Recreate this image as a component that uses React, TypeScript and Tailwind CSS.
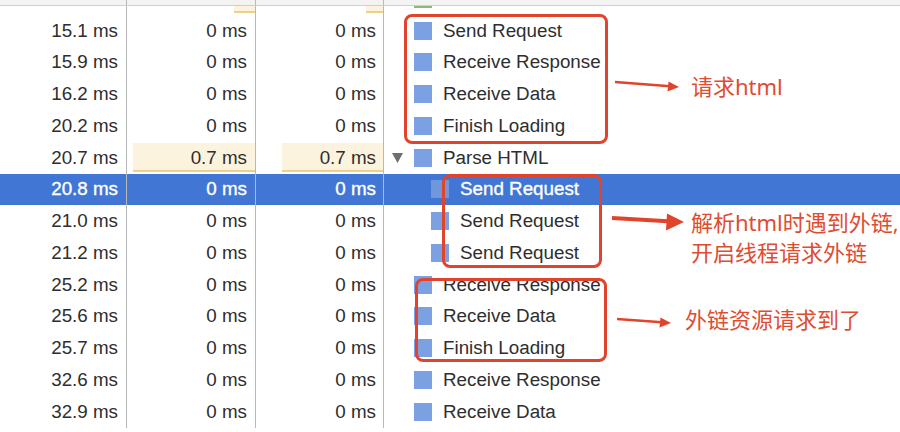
import React from "react";

type Row = {
  t: string;
  a: string;
  b: string;
  name: string;
  level: number;
  barA?: number;
  barB?: number;
  tri?: boolean;
  sel?: boolean;
  color?: string;
  hideText?: boolean;
};

const rows: Row[] = [
  { t: "", a: "", b: "", name: "Composite Layers", level: 0, barA: 21, barB: 17, color: "#8fb87a", hideText: true },
  { t: "15.1 ms", a: "0 ms", b: "0 ms", name: "Send Request", level: 0 },
  { t: "15.9 ms", a: "0 ms", b: "0 ms", name: "Receive Response", level: 0 },
  { t: "16.2 ms", a: "0 ms", b: "0 ms", name: "Receive Data", level: 0 },
  { t: "20.2 ms", a: "0 ms", b: "0 ms", name: "Finish Loading", level: 0 },
  { t: "20.7 ms", a: "0.7 ms", b: "0.7 ms", name: "Parse HTML", level: 0, barA: 122, barB: 101, tri: true },
  { t: "20.8 ms", a: "0 ms", b: "0 ms", name: "Send Request", level: 1, sel: true },
  { t: "21.0 ms", a: "0 ms", b: "0 ms", name: "Send Request", level: 1 },
  { t: "21.2 ms", a: "0 ms", b: "0 ms", name: "Send Request", level: 1 },
  { t: "25.2 ms", a: "0 ms", b: "0 ms", name: "Receive Response", level: 0 },
  { t: "25.6 ms", a: "0 ms", b: "0 ms", name: "Receive Data", level: 0 },
  { t: "25.7 ms", a: "0 ms", b: "0 ms", name: "Finish Loading", level: 0 },
  { t: "32.6 ms", a: "0 ms", b: "0 ms", name: "Receive Response", level: 0 },
  { t: "32.9 ms", a: "0 ms", b: "0 ms", name: "Receive Data", level: 0 },
];

function Bar({ w }: { w?: number }) {
  if (!w) return null;
  return (
    <div
      className="absolute right-0 top-[1px] bottom-[2px] bg-[#fbf3dd] border-b-2 border-[#ecd189]"
      style={{ width: w }}
    />
  );
}

function DataRow({ r }: { r: Row }) {
  const txt = r.sel
    ? "text-white [-webkit-text-stroke:0.35px_white]"
    : "text-[#2e2e2e]";
  return (
    <div className={`flex h-[31.75px] shrink-0 ${r.sel ? "bg-[#4176d5]" : ""}`}>
      <div className={`w-[127px] shrink-0 border-r border-[#b8b8b8] flex items-center justify-end pr-[8px] ${txt}`}>
        {r.t}
      </div>
      <div className={`relative w-[129px] shrink-0 border-r border-[#b8b8b8] flex items-center justify-end pr-[8px] ${txt}`}>
        <Bar w={r.barA} />
        <span className="relative">{r.a}</span>
      </div>
      <div className={`relative w-[128px] shrink-0 border-r border-[#b8b8b8] flex items-center justify-end pr-[7px] ${txt}`}>
        <Bar w={r.barB} />
        <span className="relative">{r.b}</span>
      </div>
      <div className={`flex-1 flex items-center ${txt}`} style={{ paddingLeft: 8 + r.level * 17 }}>
        <div className="w-[22px] shrink-0 flex items-center">
          {r.tri && (
            <svg width="11" height="10" viewBox="0 0 11 10">
              <polygon points="0,0 11,0 5.5,10" fill="#6f6f6f" />
            </svg>
          )}
        </div>
        <div
          className="w-[18px] h-[18px] shrink-0"
          style={{ background: r.color ?? (r.sel ? "#7097dc" : "#7ca1e2") }}
        />
        <span className={`ml-[11px] ${r.hideText ? "relative top-[-12px]" : ""}`}>{r.name}</span>
      </div>
    </div>
  );
}

export default function App() {
  return (
    <div
      className="relative w-[900px] h-[432px] overflow-hidden bg-white whitespace-nowrap text-[18.8px]"
      style={{ fontFamily: '"Liberation Sans", Arial, sans-serif' }}
    >
      <div className="flex flex-col mt-[-17px]">
        {rows.map((r, i) => (
          <DataRow key={i} r={r} />
        ))}
      </div>

      {/* header strip */}
      <div className="absolute left-0 top-0 w-full h-[6px] flex bg-[#f3f3f3] border-b border-[#cfcfcf]">
        <div className="w-[127px] border-r border-[#b8b8b8]" />
        <div className="w-[129px] border-r border-[#b8b8b8]" />
        <div className="w-[128px] border-r border-[#b8b8b8]" />
        <div className="flex-1" />
      </div>

      {/* red annotation boxes */}
      <div className="absolute left-[404px] top-[14px] w-[204px] h-[130px] border-[3px] border-[#e1442c] rounded-[8px]" />
      <div className="absolute left-[442px] top-[174px] w-[160px] h-[94px] border-[3px] border-[#e1442c] rounded-[8px]" />
      <div className="absolute left-[415px] top-[278px] w-[192px] h-[84px] border-[3px] border-[#e1442c] rounded-[8px]" />

      {/* arrows */}
      <svg className="absolute left-0 top-0 pointer-events-none" width="900" height="432" viewBox="0 0 900 432">
        <line x1="615" y1="82" x2="670" y2="86.3" stroke="#e1442c" strokeWidth="2.5" />
        <polygon points="679,87 668.5,81.5 667.5,91.5" fill="#e1442c" />
        <line x1="612" y1="218" x2="668" y2="221.2" stroke="#e1442c" strokeWidth="4" />
        <polygon points="684,222 667,213.5 666,230.5" fill="#e1442c" />
        <line x1="617" y1="319" x2="662" y2="322.3" stroke="#e1442c" strokeWidth="2.5" />
        <polygon points="671,323 660.5,317.5 659.5,327.5" fill="#e1442c" />
      </svg>

      {/* annotation texts */}
      <div
        className="absolute inset-0 text-[22px] leading-[30px] text-[#de4c32]"
        style={{ fontFamily: '"Noto Sans", "Noto Sans CJK SC", sans-serif' }}
      >
        <div className="absolute left-[691px] top-[71px]">请求html</div>
        <div className="absolute left-[691px] top-[207px]">
          <div>解析html时遇到外链,</div>
          <div>开启线程请求外链</div>
        </div>
        <div className="absolute left-[685px] top-[304px]">外链资源请求到了</div>
      </div>
    </div>
  );
}
